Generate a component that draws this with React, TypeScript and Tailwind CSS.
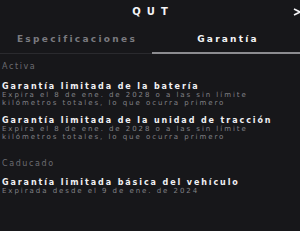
import React from "react";

const font = { fontFamily: '"DejaVu Sans", "Liberation Sans", sans-serif' };

interface Warranty {
  title: string;
  lines: string[];
}

const active: Warranty[] = [
  {
    title: "Garantía limitada de la batería",
    lines: [
      "Expira el 8 de ene. de 2028 o a las sin límite",
      "kilómetros totales, lo que ocurra primero",
    ],
  },
  {
    title: "Garantía limitada de la unidad de tracción",
    lines: [
      "Expira el 8 de ene. de 2028 o a las sin límite",
      "kilómetros totales, lo que ocurra primero",
    ],
  },
];

const expired: Warranty[] = [
  {
    title: "Garantía limitada básica del vehículo",
    lines: ["Expirada desde el 9 de ene. de 2024"],
  },
];

const WarrantyItem: React.FC<{ item: Warranty }> = ({ item }) => (
  <div className="flex flex-col">
    <div className="whitespace-nowrap text-[8px] leading-[9px] font-bold tracking-[1.9px] text-[#f1f1f3]">
      {item.title}
    </div>
    <div className="flex flex-col">
      {item.lines.map((line, i) => (
        <div
          key={i}
          className="whitespace-nowrap text-[7px] leading-[8px] tracking-[1.95px] text-[#828287]"
        >
          {line}
        </div>
      ))}
    </div>
  </div>
);

export default function App() {
  return (
    <div
      className="w-[300px] h-[231px] overflow-hidden bg-[#17171a] text-white"
      style={font}
    >
      {/* Header */}
      <div className="relative h-[24px] flex items-center justify-center">
        <span className="text-[10px] leading-[10px] font-bold tracking-[6px] pl-[6px] text-[#f4f4f6]">
          QUT
        </span>
        <svg
          className="absolute right-[-3px] top-[8px]"
          width="10"
          height="8"
          viewBox="0 0 10 8"
          fill="none"
        >
          <path d="M1 1 L7 4 L1 7" stroke="#f4f4f6" strokeWidth="1.6" />
        </svg>
      </div>

      {/* Tabs */}
      <div className="grid grid-cols-[152px_1fr] h-[30px] border-b border-[#2a2a2e]">
        <div className="flex items-center justify-center pt-[2px] text-[9px] font-bold tracking-[2.3px] pl-[2px] text-[#7a7a7f]">
          Especificaciones
        </div>
        <div className="relative flex items-center justify-center pt-[2px] pl-[4px] text-[9px] font-bold tracking-[2.2px] text-[#f4f4f6]">
          Garantía
          <div className="absolute left-0 right-0 bottom-[-1px] h-[2px] bg-[#8c8c90]" />
        </div>
      </div>

      {/* Content */}
      <div className="pl-[2px] pt-[8px] flex flex-col">
        <div className="text-[8px] leading-[10px] tracking-[1.6px] text-[#6c6c71]">
          Activa
        </div>
        <div className="mt-[10px] flex flex-col gap-[9px]">
          {active.map((w, i) => (
            <WarrantyItem key={i} item={w} />
          ))}
        </div>

        <div className="mt-[18px] text-[8px] leading-[10px] tracking-[1.6px] text-[#6c6c71]">
          Caducado
        </div>
        <div className="mt-[9px] flex flex-col gap-[9px]">
          {expired.map((w, i) => (
            <WarrantyItem key={i} item={w} />
          ))}
        </div>
      </div>
    </div>
  );
}
